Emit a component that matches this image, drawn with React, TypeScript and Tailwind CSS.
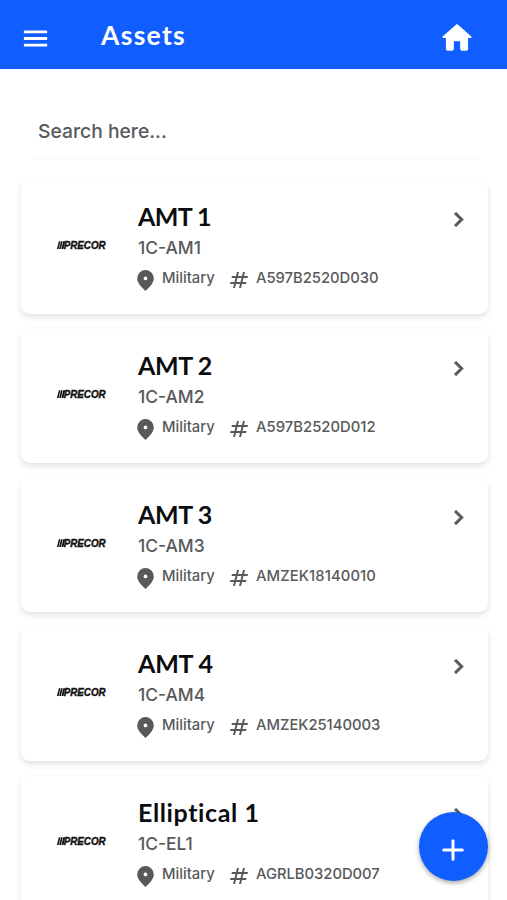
interface Asset {
  name: string;
  code: string;
  location: string;
  serial: string;
  nameSpacing: string;
  serialSpacing: string;
}

const assets: Asset[] = [
  { name: 'AMT 1', code: '1C-AM1', location: 'Military', serial: 'A597B2520D030', nameSpacing: 'tracking-[-0.6px]', serialSpacing: 'tracking-[-0.02px]' },
  { name: 'AMT 2', code: '1C-AM2', location: 'Military', serial: 'A597B2520D012', nameSpacing: 'tracking-[-0.4px]', serialSpacing: 'tracking-[0.03px]' },
  { name: 'AMT 3', code: '1C-AM3', location: 'Military', serial: 'AMZEK18140010', nameSpacing: 'tracking-[-0.4px]', serialSpacing: 'tracking-[0.1px]' },
  { name: 'AMT 4', code: '1C-AM4', location: 'Military', serial: 'AMZEK25140003', nameSpacing: 'tracking-[-0.2px]', serialSpacing: 'tracking-[-0.03px]' },
  { name: 'Elliptical 1', code: '1C-EL1', location: 'Military', serial: 'AGRLB0320D007', nameSpacing: 'tracking-[0.6px]', serialSpacing: 'tracking-[-0.03px]' },
];

const Icon = ({ path, className }: { path: string; className: string }) => (
  <svg viewBox="0 0 24 24" fill="currentColor" fillRule="evenodd" className={className}>
    <path d={path} />
  </svg>
);

const icons = {
  menu: 'M3 18.2h18v-2.2H3v2.2zm0-5.1h18v-2.2H3v2.2zm0-7.3v2.2h18V5.8H3z',
  home: 'M10 19v-5h4v5c0 .55.45 1 1 1h3c.55 0 1-.45 1-1v-7h1.7c.46 0 .68-.57.33-.87L12.67 3.6c-.38-.34-.96-.34-1.34 0l-8.36 7.53c-.34.3-.13.87.33.87H5v7c0 .55.45 1 1 1h3c.55 0 1-.45 1-1z',
  pin: 'M12 22q-4.025-3.425-6.012-6.362T4 10.2q0-3.75 2.412-5.975T12 2t5.588 2.225T20 10.2q0 2.5-1.988 5.438T12 22zM12 8.2a1.8 1.8 0 1 0 0 3.6a1.8 1.8 0 1 0 0-3.6z',
  hash: 'm20.5 10 .5-2h-4l1-4h-2l-1 4h-4l1-4h-2L9 8H5l-.5 2h4l-1 4h-4L3 16h4l-1 4h2l1-4h4l-1 4h2l1-4h4l.5-2h-4l1-4h4zm-7 4h-4l1-4h4l-1 4z',
  chevron: 'M10 6 8.59 7.41 13.17 12l-4.58 4.59L10 18l6-6z',
};

const PrecorLogo = () => (
  <svg viewBox="0 0 50 10" className="h-[10px] w-[50px] shrink-0 overflow-visible" fill="#111">
    <path d="M1.9 1.2h1.5L1.6 9H-.1zM4 1.2h1.7L3.9 9H2.2zM6.3 1.2h1.9L6.4 9H4.5z" />
    <text
      x="6.7"
      y="9"
      fontFamily="'Liberation Sans', sans-serif"
      fontSize="10.5"
      fontWeight="700"
      fontStyle="italic"
      stroke="#111"
      strokeWidth="0.4"
      textLength="42"
      lengthAdjust="spacingAndGlyphs"
    >
      PRECOR
    </text>
  </svg>
);

const AssetCard = ({ asset }: { asset: Asset }) => (
  <div className="flex h-[134px] shrink-0 rounded-[9px] bg-white pl-9 pr-[15px] shadow-[0_3px_6px_rgba(0,0,0,0.12)]">
    <div className="flex w-[81px] items-center pb-1">
      <PrecorLogo />
    </div>
    <div className="flex-1 pt-[21px]">
      <h2 className={`h-[35px] whitespace-nowrap font-['Lato',sans-serif] text-[25px] font-bold leading-[31px] text-[#0b0c0e] ${asset.nameSpacing}`}>
        {asset.name}
      </h2>
      <p className="h-[23px] text-[17.4px] font-[450] leading-6">{asset.code}</p>
      <div className="flex h-[38px] items-center text-[14.8px] font-[450]">
        <Icon path={icons.pin} className="-ml-[5px] mt-1 size-[25px] shrink-0" />
        <span className="ml-1 w-[65px]">{asset.location}</span>
        <Icon path={icons.hash} className="mt-1 size-[24px] shrink-0" />
        <span className={`ml-[5px] whitespace-nowrap ${asset.serialSpacing}`}>{asset.serial}</span>
      </div>
    </div>
    <svg viewBox="0 0 24 24" className="mt-[25px] size-[29px] shrink-0" fill="currentColor" stroke="currentColor" strokeWidth="0.6">
      <path d={icons.chevron} />
    </svg>
  </div>
);

export default function App() {
  return (
    <div className="relative flex h-[900px] w-[507px] flex-col overflow-hidden bg-white font-['Inter',sans-serif] text-[#58595b]">
      <header className="flex h-[69px] shrink-0 items-center bg-[#105eff] pl-5 pr-[31px] pt-[7px] text-white">
        <Icon path={icons.menu} className="size-[31px]" />
        <h1 className="ml-[50px] flex-1 pb-[6px] font-['Lato',sans-serif] text-[26.5px] font-bold leading-8 tracking-[1.3px]">
          Assets
        </h1>
        <Icon path={icons.home} className="size-[38px]" />
      </header>

      <main className="flex flex-col pl-[21px] pr-[19px]">
        <div className="ml-[11px] mr-[9px] mt-[33px] h-[57px] border-b border-[#f7f7f7] px-[6px] pt-[13px]">
          <span className="block text-[19.3px] font-[450] leading-[32px]">Search here...</span>
        </div>
        <div className="mt-[21px] flex flex-col gap-[15px]">
          {assets.map((asset) => (
            <AssetCard key={asset.code} asset={asset} />
          ))}
        </div>
      </main>

      {/* Floating add button */}
      <button className="absolute left-[418.5px] top-[812px] flex size-[69px] items-center justify-center rounded-full bg-[#105eff] pt-[7px] text-white shadow-[0_2px_5px_rgba(0,0,0,0.35)]">
        <svg viewBox="0 0 22 22" className="size-[22px]" stroke="currentColor" strokeWidth="3" strokeLinecap="round">
          <path d="M11 1.7v18.6M1.7 11h18.6" />
        </svg>
      </button>
    </div>
  );
}
